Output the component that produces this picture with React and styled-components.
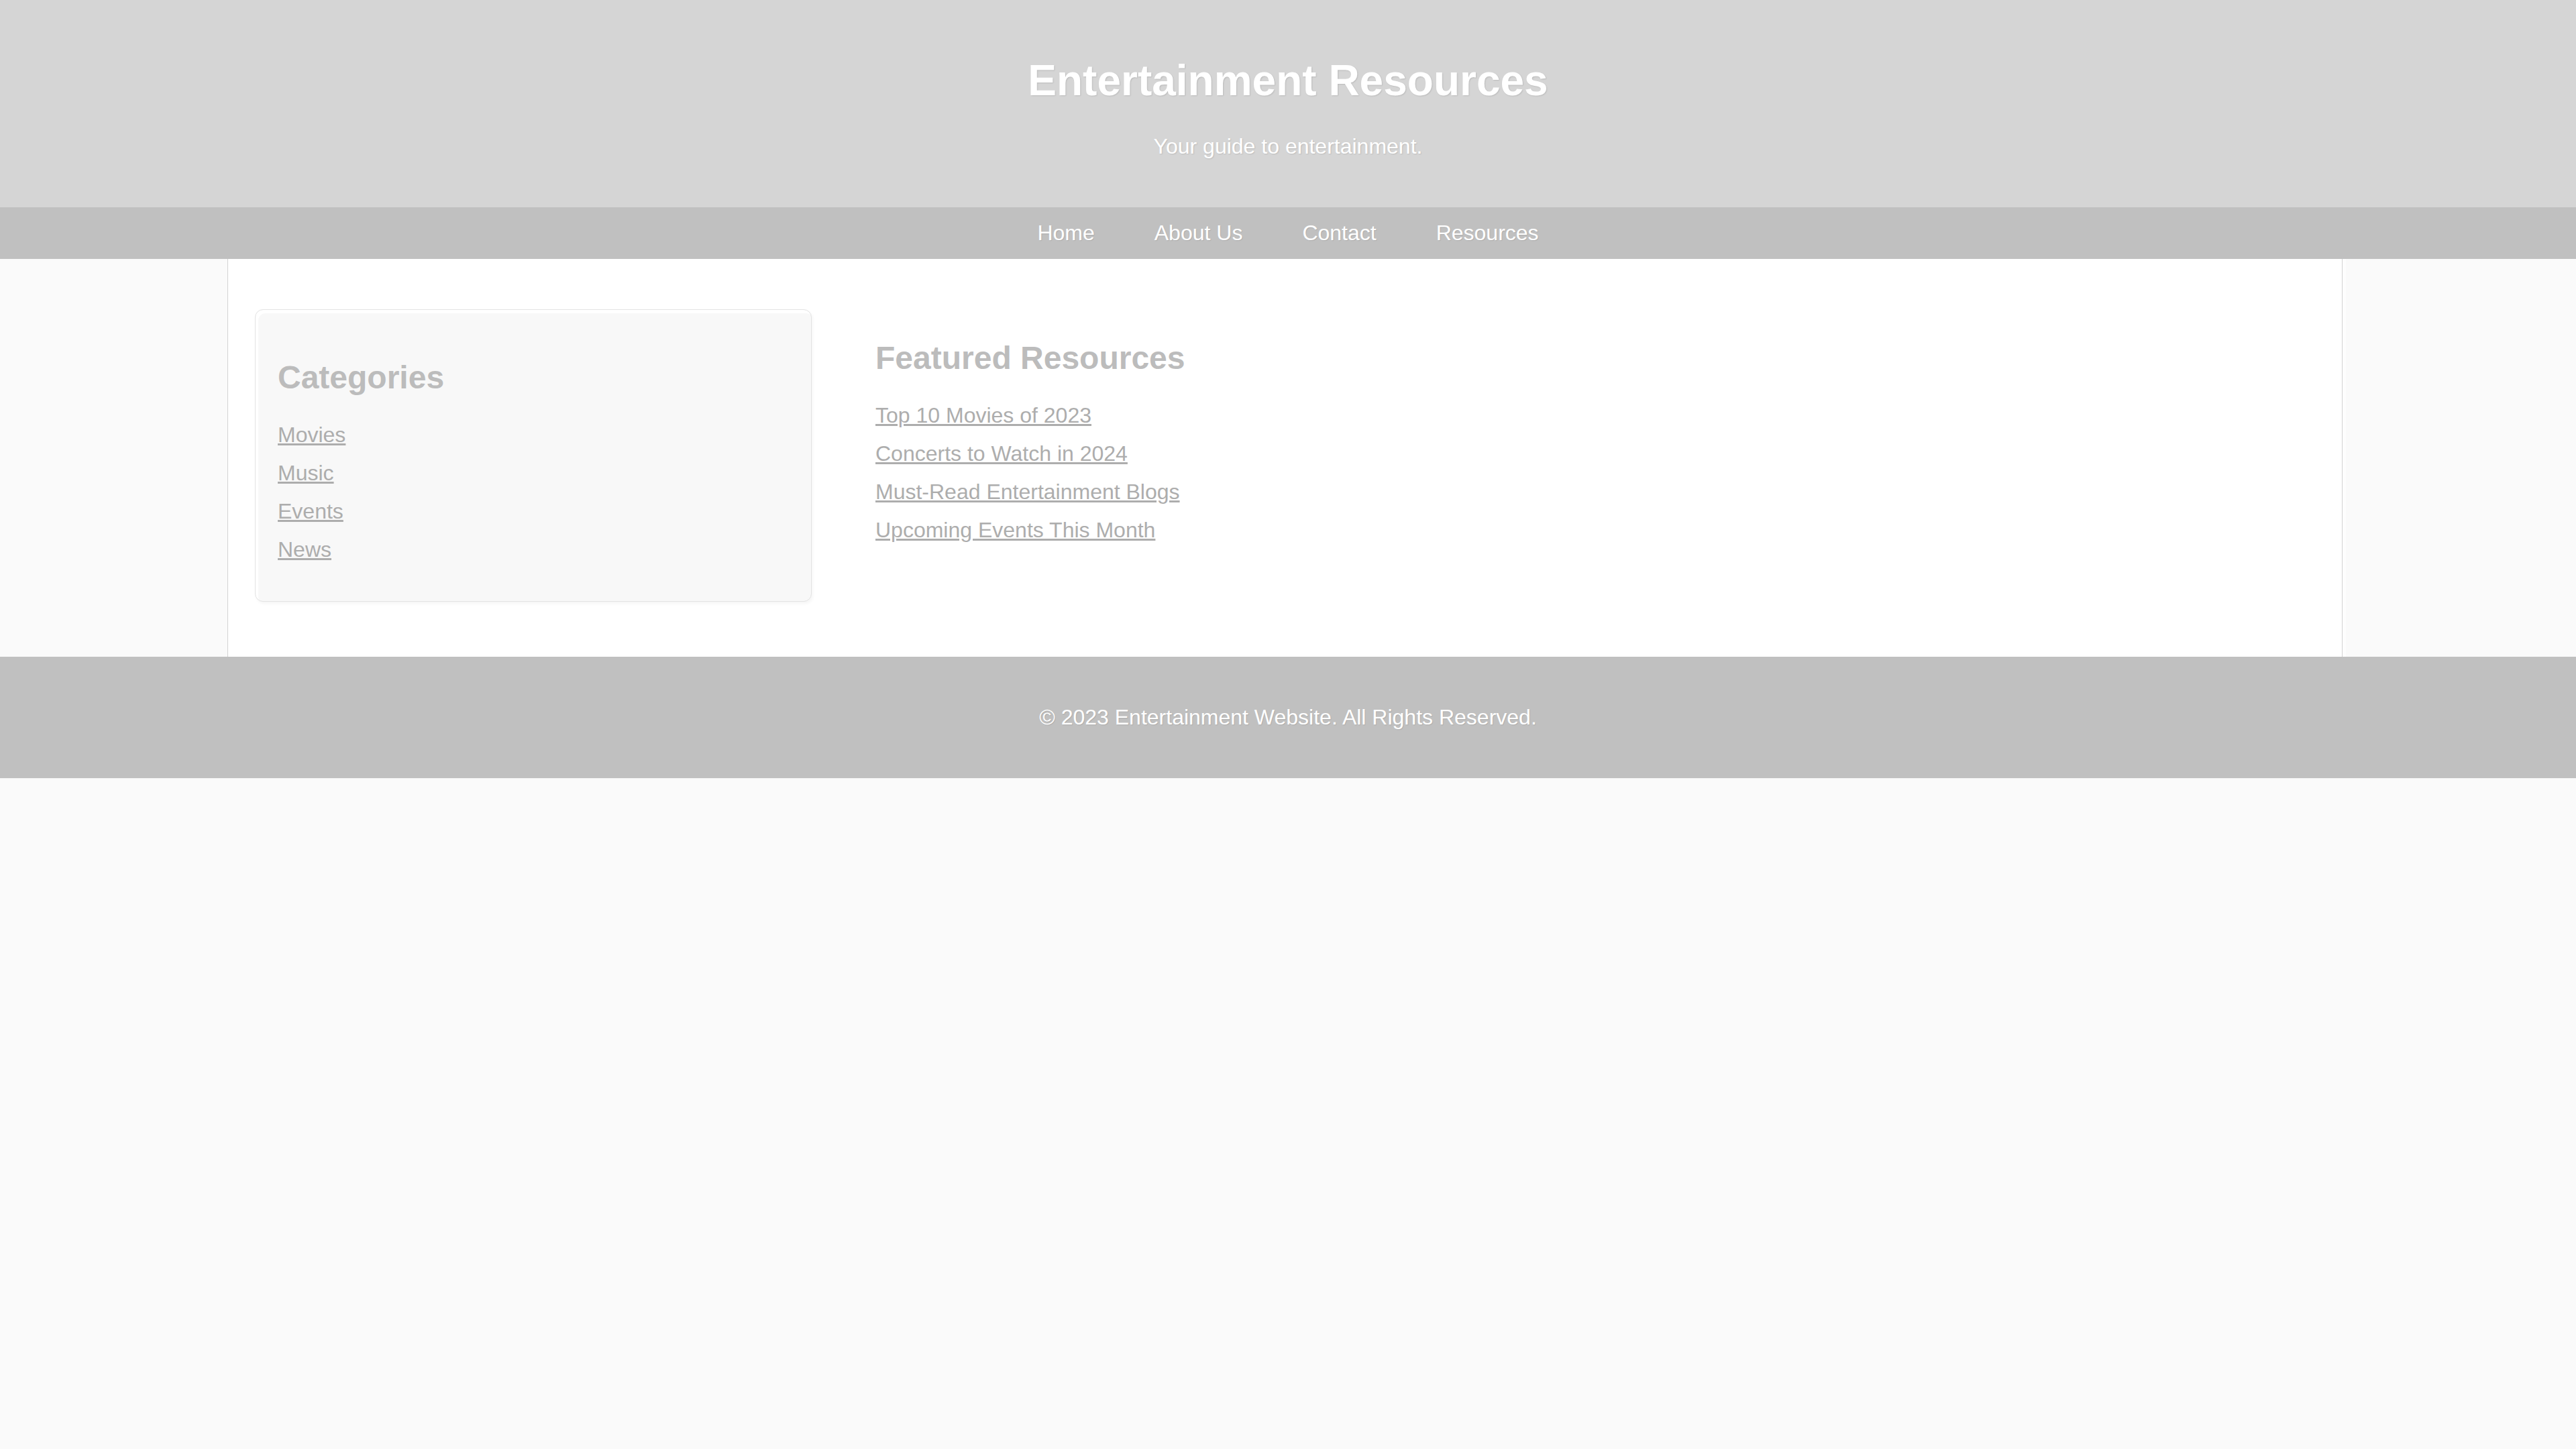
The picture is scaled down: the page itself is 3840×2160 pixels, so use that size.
import React from "react";
import styled, { createGlobalStyle } from "styled-components";

const GlobalStyle = createGlobalStyle`
  html, body {
    margin: 0;
    padding: 0;
    background: #fafafa;
    font-family: "Liberation Sans", Arial, sans-serif;
    font-size: 32px;
  }
`;

const categories = ["Movies", "Music", "Events", "News"];

const featured = [
  "Top 10 Movies of 2023",
  "Concerts to Watch in 2024",
  "Must-Read Entertainment Blogs",
  "Upcoming Events This Month",
];

const navItems = ["Home", "About Us", "Contact", "Resources"];

const Header = styled.header`
  background: #d5d5d5;
  color: #fff;
  text-align: center;
  padding: 40px 0;
  text-shadow: 1px 1px 2px rgba(0, 0, 0, 0.12);

  h1 {
    font-size: 64px;
    font-weight: bold;
    margin: 43px 0;
  }

  p {
    font-size: 32px;
    margin: 32px 0;
  }
`;

const Nav = styled.nav`
  background: #c0c0c0;
  padding: 20px 0;
  display: flex;
  justify-content: center;
  gap: 89px;
`;

const NavLink = styled.a`
  color: #fff;
  text-decoration: none;
  font-size: 32px;
  line-height: 37px;
  text-shadow: 1px 1px 1px rgba(0, 0, 0, 0.1);
`;

const Container = styled.main`
  width: 3071px;
  margin: 0 auto 0 339px;
  padding: 40px;
  background: #fff;
  border-left: 1px solid #d2d2d2;
  border-right: 1px solid #d2d2d2;
  box-shadow: 5px 0 0 #fdfdfd;
  display: flex;
  align-items: flex-start;
  gap: 55px;
`;

const Sidebar = styled.aside`
  flex: 0 0 762px;
  margin: 35px 0 42px 0;
  padding: 33px 33px 26px;
  background: #f8f8f8;
  border: 1px solid #e3e3e3;
  border-radius: 12px;
  box-shadow: inset 4px 5px 0 #fff, 2px 3px 4px rgba(0, 0, 0, 0.04);
`;

const Content = styled.section`
  flex: 1;
  padding: 40px;
`;

const Heading = styled.h2`
  font-size: 48px;
  font-weight: bold;
  color: #bcbcbc;
  margin: 40px 0;
  line-height: 55px;
`;

const LinkList = styled.ul`
  list-style: none;
  padding: 0;
  margin: 32px 0;
`;

const LinkItem = styled.li`
  margin-bottom: 20px;
  line-height: 37px;

  a {
    color: #adadad;
    font-size: 32px;
    text-decoration: underline;
  }
`;

const Footer = styled.footer`
  background: #c0c0c0;
  color: #fff;
  text-align: center;
  padding: 40px 0;
  text-shadow: 1px 1px 1px rgba(0, 0, 0, 0.1);

  p {
    margin: 32px 0;
    font-size: 32px;
    line-height: 37px;
  }
`;

const App = () => {
  return (
    <>
      <GlobalStyle />
      <Header>
        <h1>Entertainment Resources</h1>
        <p>Your guide to entertainment.</p>
      </Header>
      <Nav>
        {navItems.map((item) => (
          <NavLink href="#" key={item}>
            {item}
          </NavLink>
        ))}
      </Nav>
      <Container>
        <Sidebar>
          <Heading>Categories</Heading>
          <LinkList>
            {categories.map((c) => (
              <LinkItem key={c}>
                <a href="#">{c}</a>
              </LinkItem>
            ))}
          </LinkList>
        </Sidebar>
        <Content>
          <Heading>Featured Resources</Heading>
          <LinkList>
            {featured.map((f) => (
              <LinkItem key={f}>
                <a href="#">{f}</a>
              </LinkItem>
            ))}
          </LinkList>
        </Content>
      </Container>
      <Footer>
        <p>© 2023 Entertainment Website. All Rights Reserved.</p>
      </Footer>
    </>
  );
};

export default App;
